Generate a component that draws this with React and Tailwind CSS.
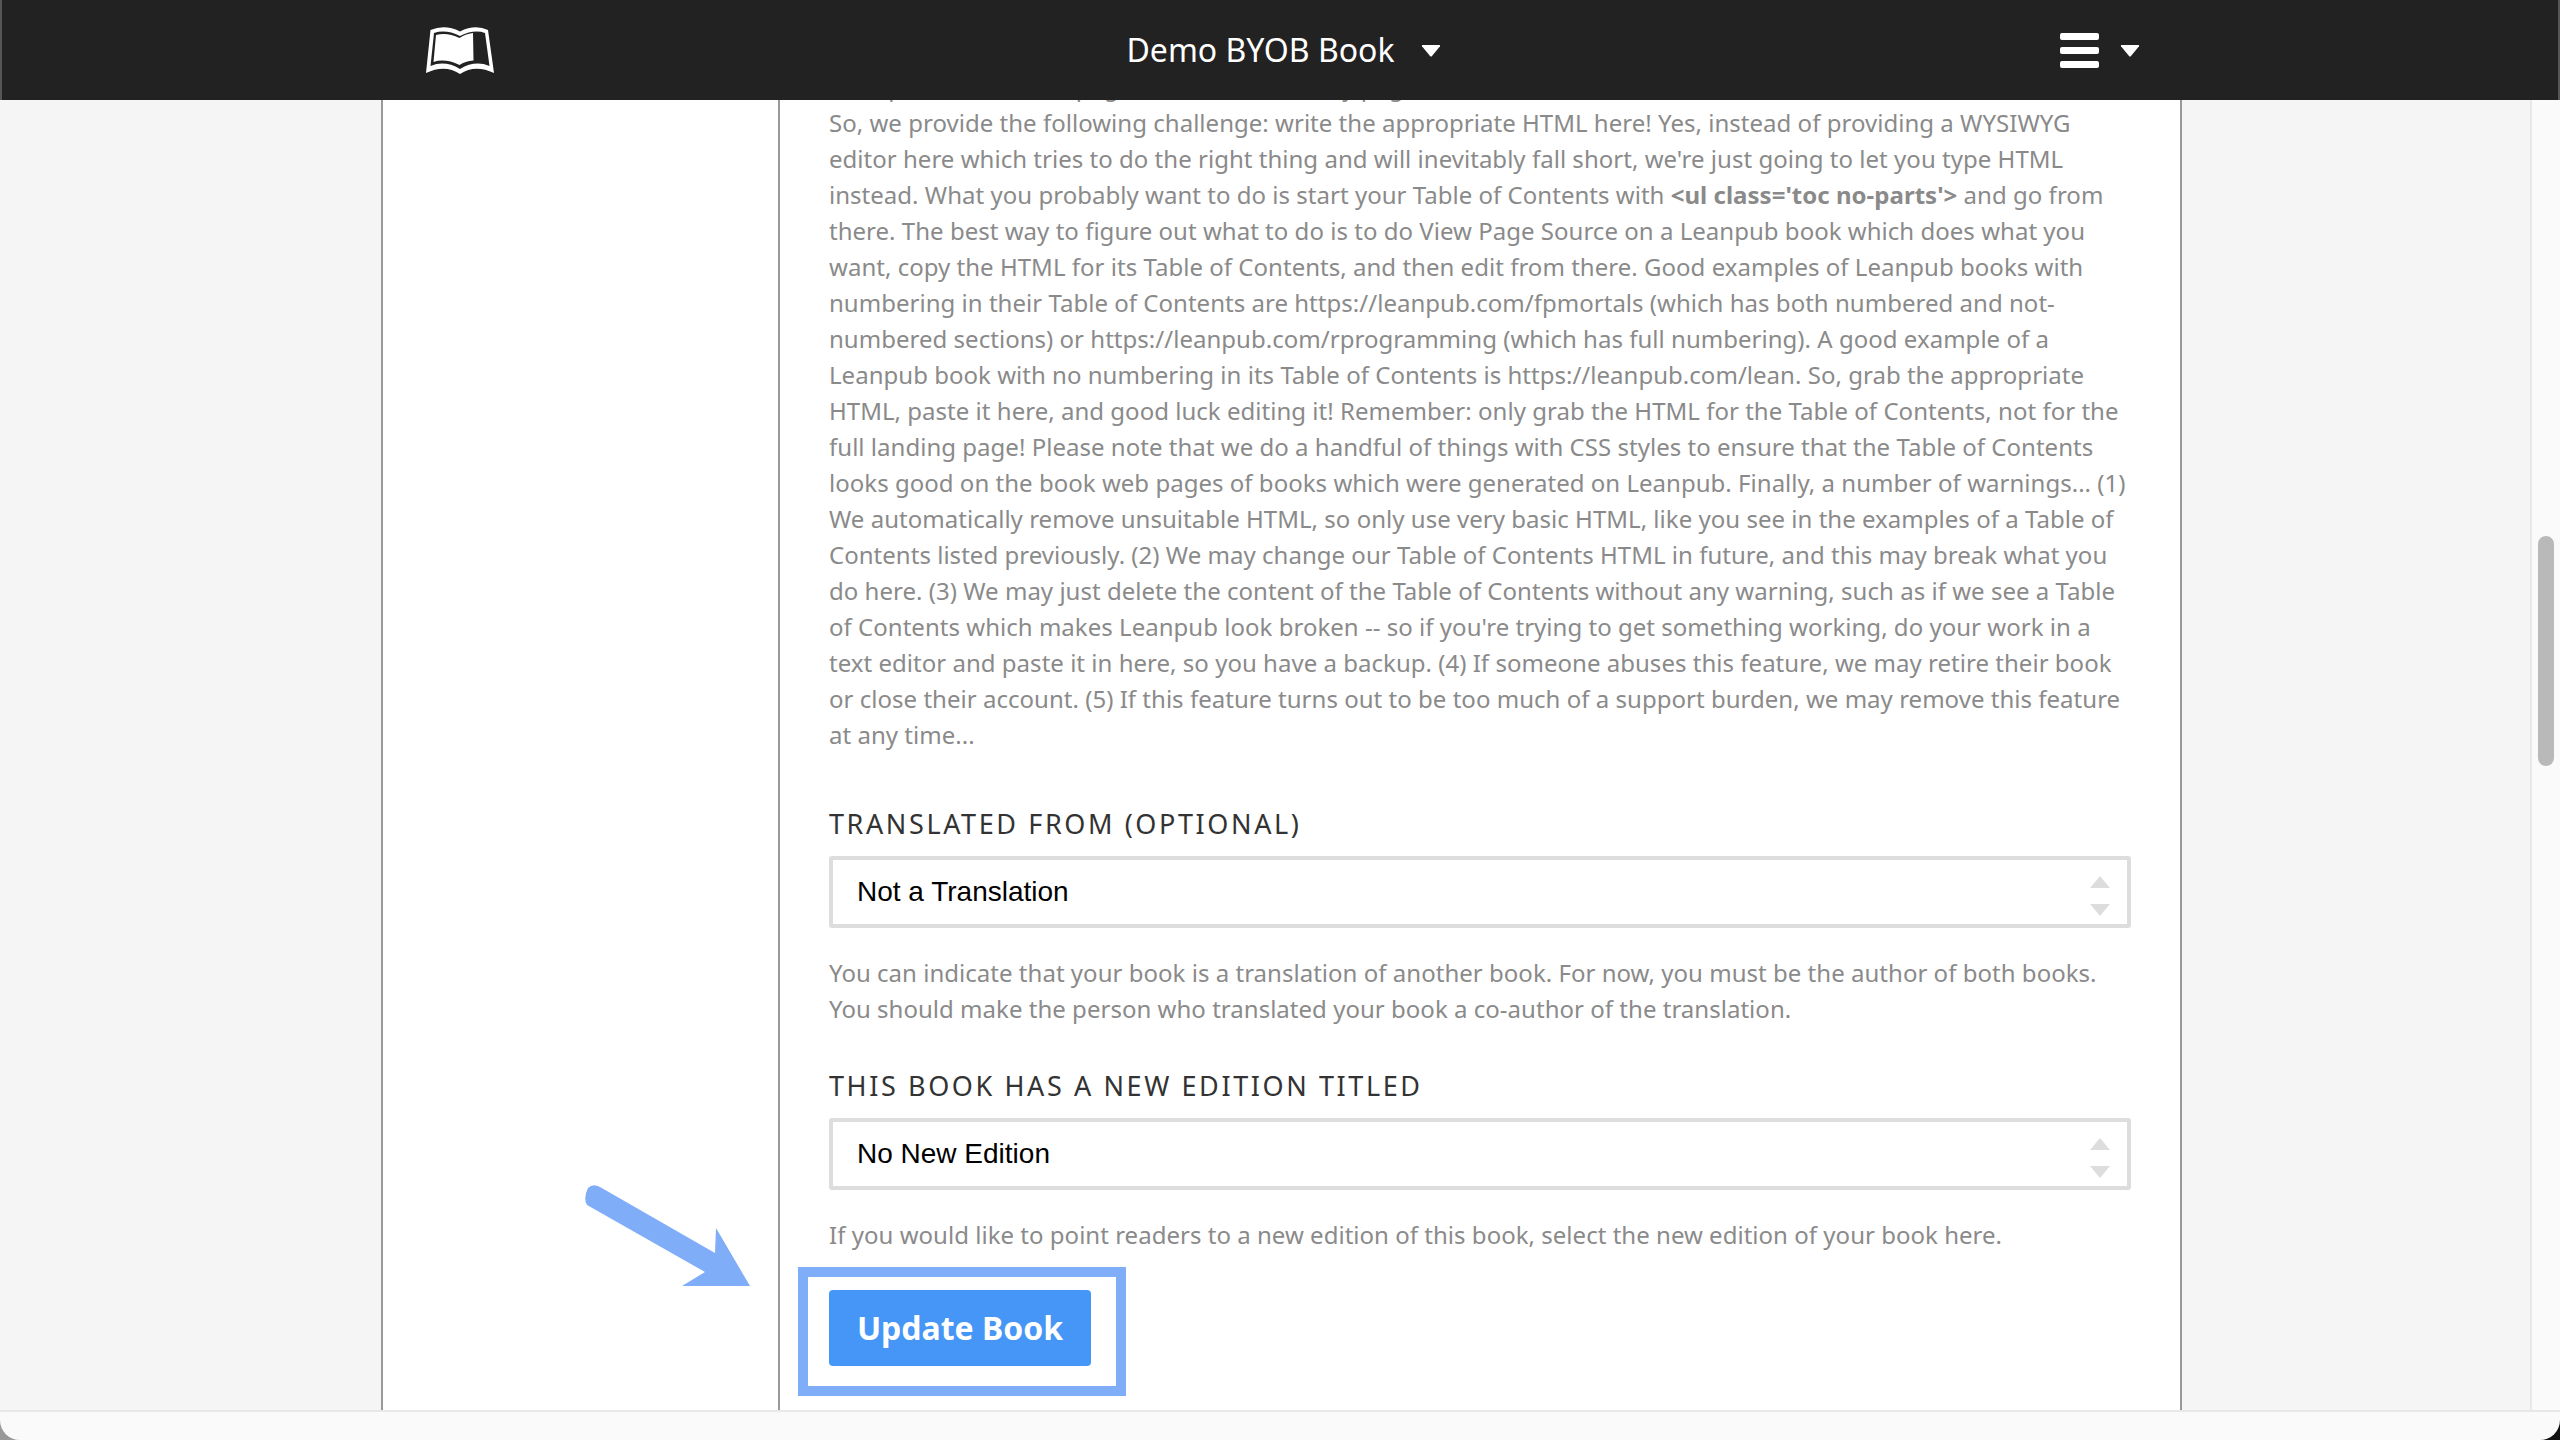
function Caret({ className }) {
  return (
    <svg viewBox="0 0 20 12" className={className} fill="#fff">
      <path d="M1 1.2 Q0.4 0 1.8 0 H18.2 Q19.6 0 19 1.2 L11 11 Q10 12 9 11 Z" />
    </svg>
  );
}
function BookIcon() {
  return (
    <svg viewBox="0 0 70 48" className="w-[70px] h-[48px]">
      <path fill="#fff" d="M1 47 L5.5 4 Q20 -2 35 5.5 Q50 -2 63 4 L69 47 Q50 38 35 48 Q20 38 1 47 Z" />
      <path fill="#222222" d="M5.5 40 L9 7 Q21 3 35 10 Q49 3 60 7 L64.5 40 Q50 34 35 43 Q20 34 5.5 40 Z" />
      <path fill="#fff" d="M8.5 36 L11 9 Q22 6 34.5 12 Q40 8 48 7 L48.5 34.5 Q40 35 34.5 39 Q20 32 8.5 36 Z" />
    </svg>
  );
}
function SelectBox({ value }) {
  return (
    <div className="shrink-0 flex items-center justify-between h-[72px] border-[4px] border-[#dddddd] rounded-[3px] pl-[24px] pr-[17px] bg-white">
      <span className="text-[28px] text-black font-['Liberation_Sans',sans-serif]">{value}</span>
      <div className="flex flex-col gap-[16px] mt-[8px]">
        <svg viewBox="0 0 20 12" className="w-[20px] h-[12px]" fill="#dddddd"><path d="M10 0 L20 12 H0 Z" /></svg>
        <svg viewBox="0 0 20 12" className="w-[20px] h-[12px]" fill="#dddddd"><path d="M0 0 H20 L10 12 Z" /></svg>
      </div>
    </div>
  );
}
export default function App() {
  return (
    <div className="relative h-screen w-full overflow-hidden flex flex-col bg-[#f5f5f5] font-['Noto_Sans',sans-serif]">
      <header className="h-[100px] shrink-0 bg-[#222222] border-x-2 border-[#555555] flex items-center justify-between pl-[423px] pr-[418px] z-10">
        <BookIcon />
        <div className="flex items-center gap-[26px] ml-[12px] text-white text-[32px]">
          <span>Demo BYOB Book</span>
          <Caret className="w-[20px] h-[12px] mt-[2px]" />
        </div>
        <div className="flex items-center gap-[21px]">
          <div className="flex flex-col gap-[7px] w-[39px]">
            <div className="h-[7px] bg-white rounded-[2px]" />
            <div className="h-[7px] bg-white rounded-[2px]" />
            <div className="h-[7px] bg-white rounded-[2px]" />
          </div>
          <Caret className="w-[20px] h-[12px] mt-[2px]" />
        </div>
      </header>
      <div className="flex-1 min-h-0 flex pl-[381px] pr-[378px]">
        <div className="flex-1 min-w-0 flex bg-white border-x-2 border-[#999999]">
          <div className="w-[397px] shrink-0 border-r-2 border-[#999999]" />
          <div className="flex-1 min-w-0 flex flex-col justify-end overflow-hidden pl-[49px] pr-[49px] pb-[44px]">
            <div className="shrink-0 text-[24px] leading-[36px] tracking-[0.025px] text-[#8a8a8a] whitespace-nowrap">
              <p>Alas, pure text on the page can be hard on any page, and it is not for the faint of heart.</p>
              <p>So, we provide the following challenge: write the appropriate HTML here! Yes, instead of providing a WYSIWYG</p>
              <p>editor here which tries to do the right thing and will inevitably fall short, we're just going to let you type HTML</p>
              <p>instead. What you probably want to do is start your Table of Contents with <b>&lt;ul class='toc no-parts'&gt;</b> and go from</p>
              <p>there. The best way to figure out what to do is to do View Page Source on a Leanpub book which does what you</p>
              <p>want, copy the HTML for its Table of Contents, and then edit from there. Good examples of Leanpub books with</p>
              <p>numbering in their Table of Contents are https://leanpub.com/fpmortals (which has both numbered and not-</p>
              <p>numbered sections) or https://leanpub.com/rprogramming (which has full numbering). A good example of a</p>
              <p>Leanpub book with no numbering in its Table of Contents is https://leanpub.com/lean. So, grab the appropriate</p>
              <p>HTML, paste it here, and good luck editing it! Remember: only grab the HTML for the Table of Contents, not for the</p>
              <p>full landing page! Please note that we do a handful of things with CSS styles to ensure that the Table of Contents</p>
              <p>looks good on the book web pages of books which were generated on Leanpub. Finally, a number of warnings... (1)</p>
              <p>We automatically remove unsuitable HTML, so only use very basic HTML, like you see in the examples of a Table of</p>
              <p>Contents listed previously. (2) We may change our Table of Contents HTML in future, and this may break what you</p>
              <p>do here. (3) We may just delete the content of the Table of Contents without any warning, such as if we see a Table</p>
              <p>of Contents which makes Leanpub look broken -- so if you're trying to get something working, do your work in a</p>
              <p>text editor and paste it in here, so you have a backup. (4) If someone abuses this feature, we may retire their book</p>
              <p>or close their account. (5) If this feature turns out to be too much of a support burden, we may remove this feature</p>
              <p>at any time...</p>
            </div>
            <label className="shrink-0 mt-[53px] mb-[14px] text-[27px] leading-[36px] tracking-[2.6px] text-[#333333]">TRANSLATED FROM (OPTIONAL)</label>
            <SelectBox value="Not a Translation" />
            <div className="shrink-0 mt-[27px] text-[24px] leading-[36px] tracking-[0.025px] text-[#8a8a8a] whitespace-nowrap">
              <p>You can indicate that your book is a translation of another book. For now, you must be the author of both books.</p>
              <p>You should make the person who translated your book a co-author of the translation.</p>
            </div>
            <label className="shrink-0 mt-[41px] mb-[14px] text-[27px] leading-[36px] tracking-[2.6px] text-[#333333]">THIS BOOK HAS A NEW EDITION TITLED</label>
            <SelectBox value="No New Edition" />
            <p className="shrink-0 mt-[27px] text-[24px] leading-[36px] tracking-[0.025px] text-[#8a8a8a] whitespace-nowrap">If you would like to point readers to a new edition of this book, select the new edition of your book here.</p>
            <button className="shrink-0 mt-[37px] w-[262px] h-[76px] rounded-[4px] bg-[#4596f7] text-white font-bold text-[32px]">Update Book</button>
          </div>
        </div>
      </div>
      <div className="h-[30px] shrink-0 bg-[linear-gradient(90deg,#999999_50%,#111111_50%)]">
        <div className="h-full bg-[#fafafa] border-t-2 border-[#e8e8e8] rounded-b-[20px]" />
      </div>
      <div className="absolute right-0 top-[100px] bottom-[30px] w-[30px] bg-[#fafafa] border-l-2 border-[#e8e8e8]">
        <div className="absolute left-[6px] top-[436px] h-[230px] w-[16px] rounded-full bg-[#b9b9b9]" />
      </div>
      <div className="absolute left-[798px] top-[1267px] w-[328px] h-[129px] border-[10px] border-[#7fadf7]" />
      <svg className="absolute left-[580px] top-[1184px] w-[175px] h-[110px]" viewBox="0 0 175 110" fill="#7fadf7">
        <path d="M20 3 Q13 -1 8 4 Q3 14 7 21 L125 88 L102 102 H170 L136 44 L135 69 Z" />
      </svg>
    </div>
  );
}
